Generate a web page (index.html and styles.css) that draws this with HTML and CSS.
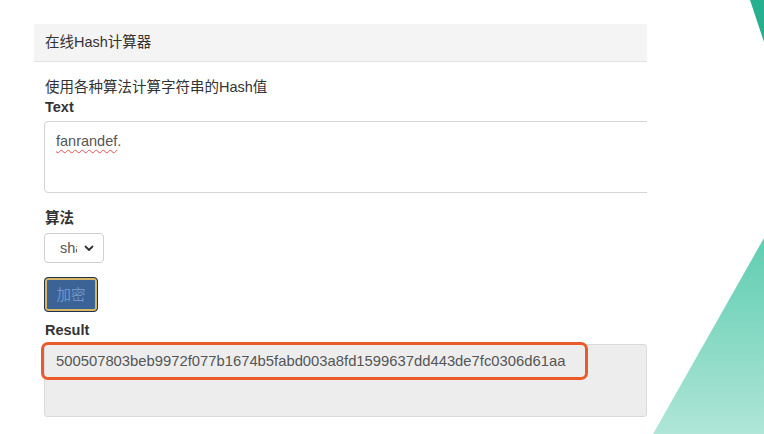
FILE: index.html
```html
<!DOCTYPE html>
<html lang="zh-CN">
<head>
  <meta charset="UTF-8">
  <meta name="viewport" content="width=device-width, initial-scale=1.0">
  <title>在线Hash计算器</title>
  <link rel="stylesheet" href="styles.css">
</head>
<body>

  <svg class="deco" width="764" height="434" viewBox="0 0 764 434">
    <defs>
      <linearGradient id="mint" x1="0" y1="0" x2="0" y2="1">
        <stop offset="0" stop-color="#5fcdb1"/>
        <stop offset="1" stop-color="#afe6d7"/>
      </linearGradient>
    </defs>
    <polygon points="750,0 764,0 764,42" fill="#27b08f"/>
    <polygon points="764,238 764,434 653,434" fill="url(#mint)"/>
  </svg>

  <div class="panel">
    <div class="panel-heading">在线Hash计算器</div>
    <div class="panel-body">
      <p class="intro">使用各种算法计算字符串的Hash值</p>
      <label class="label">Text</label>
      <div class="textarea"><span class="typo">fanrandef</span>.</div>

      <label class="label algo">算法</label>
      <div class="select">
        <span class="select-value">sha</span>
        <svg class="chevron" width="10" height="7" viewBox="0 0 10 7">
          <path d="M1.5 1.5 L5 5 L8.5 1.5" fill="none" stroke="#333" stroke-width="1.8" stroke-linecap="round" stroke-linejoin="round"/>
        </svg>
      </div>

      <button class="btn">加密</button>

      <label class="label result-label">Result</label>
      <div class="result">
        <div class="hash">500507803beb9972f077b1674b5fabd003a8fd1599637dd443de7fc0306d61aa</div>
        <div class="mark"></div>
      </div>
    </div>
  </div>

</body>
</html>
```

FILE: styles.css
```css
* {
  margin: 0;
  padding: 0;
  box-sizing: border-box;
}

body {
  font-family: 'Liberation Sans', Arial, 'Noto Sans CJK SC', sans-serif;
  font-size: 14.5px;
  line-height: 20px;
  color: #333;
  background: #fff;
  padding: 24px 0 0 34px;
  width: 764px;
  height: 434px;
  overflow: hidden;
  position: relative;
}

.deco {
  position: absolute;
  top: 0;
  left: 0;
}

.panel {
  width: 613px;
  overflow: hidden;
  background: #fff;
  position: relative;
}

.panel-heading {
  height: 38px;
  line-height: 37px;
  padding: 0 11px;
  background: #f4f4f4;
  border-bottom: 1px solid #e3e3e3;
}

.panel-body {
  padding: 15px 0 0 10px;
}

.intro {
  padding-left: 1px;
}

.label {
  display: block;
  font-weight: bold;
  padding-left: 1px;
}

.textarea {
  width: 700px;
  height: 72px;
  margin-top: 4px;
  padding: 9px 11px;
  border: 1px solid #d4d4d4;
  border-radius: 4px;
  color: #555;
}

.typo {
  text-decoration: underline wavy #e05050;
  text-decoration-thickness: 1px;
  text-underline-offset: 3px;
}

.algo {
  margin-top: 15px;
}

.select {
  display: flex;
  align-items: center;
  width: 60px;
  height: 30px;
  margin-top: 5px;
  padding: 0 9px 0 15px;
  border: 1px solid #d0d0d0;
  border-radius: 4px;
  color: #555;
}

.select-value {
  width: 17px;
  overflow: hidden;
  white-space: nowrap;
}

.chevron {
  margin-left: auto;
}

.btn {
  display: block;
  width: 54px;
  height: 35px;
  margin-top: 14px;
  font: inherit;
  color: #6f95c9;
  background: #3b6396;
  border: 1px solid #25314a;
  border-radius: 4px;
  box-shadow: inset 0 0 0 2px #d8b866;
}

.result-label {
  margin-top: 8px;
}

.result {
  position: relative;
  width: 603px;
  height: 73px;
  margin-top: 4px;
  padding: 6px 11px;
  background: #ededed;
  border: 1px solid #dadada;
  border-radius: 3px;
}

.hash {
  font-size: 14.8px;
  color: #555;
  white-space: nowrap;
}

/* highlight drawn round the hash */
.mark {
  position: absolute;
  left: -4px;
  top: -3px;
  width: 547px;
  height: 38px;
  border: 3.5px solid #ea5a2b;
  border-radius: 7px;
}
```
